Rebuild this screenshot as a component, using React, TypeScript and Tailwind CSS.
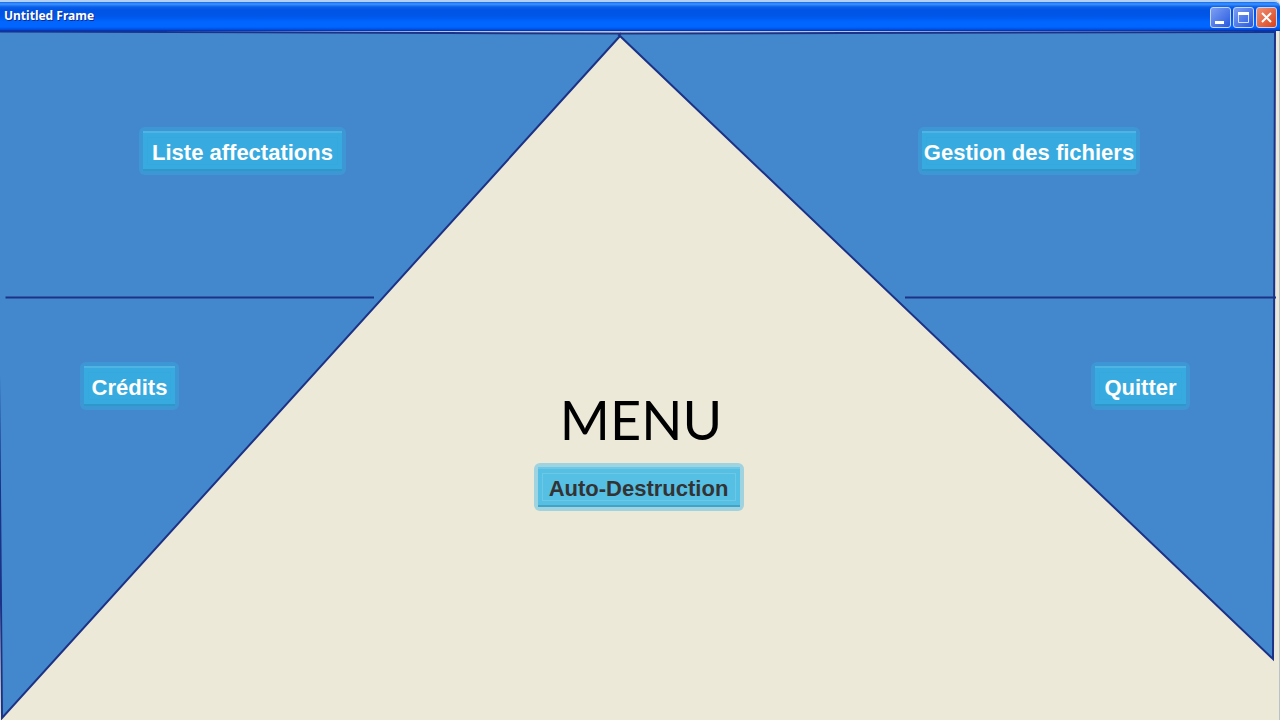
import type { ReactNode } from "react";

type MenuButtonProps = {
  children: ReactNode;
  width: string;
  tone?: "light" | "dark";
};

function MenuButton({ children, width, tone = "light" }: MenuButtonProps) {
  const frame = tone === "light" ? "bg-[#3d97d5]" : "bg-[#9fd3df]";
  const face =
    tone === "light"
      ? "border-t-[#4fb3e3] border-b-[#2f98ca] bg-[#37abe0] text-white"
      : "border-t-[#6cc8e6] border-b-[#43a3c4] bg-[#56bfe4] text-[#333333]";
  const inset = tone === "light" ? "border-[#35a8dd]" : "border-[#6cc8e4]";
  return (
    <button type="button" className={`h-12 rounded-md p-1 ${width} ${frame}`}>
      <span className={`block h-full border-t-2 border-b-2 px-1 py-1 ${face}`}>
        <span
          className={`flex h-full items-center justify-center border pt-[3px] text-[22px] leading-6 font-bold whitespace-nowrap ${inset}`}
        >
          {children}
        </span>
      </span>
    </button>
  );
}

function TitleBar() {
  const control =
    "flex size-[21px] items-center justify-center rounded-[3px] border border-[#c5d5f8]";
  return (
    <header className="flex h-[31px] items-center justify-between rounded-tr-md border-t-2 border-b border-t-[#b5d0f5] border-b-[#0037c0] bg-[linear-gradient(#1468ea_0px,#3c94ff_2px,#0a5ee8_5px,#0054e3_8px,#0056e8_14px,#0066ff_20px,#0066ff_25px,#0047d8_28px)] pr-[3px] pl-1">
      <h1 className="font-['Noto_Sans',sans-serif] text-[12px] leading-4 font-bold text-white [text-shadow:1px_1px_0_#0f2a8f]">
        Untitled Frame
      </h1>
      <div className="flex gap-0.5 pt-0.5">
        <button
          type="button"
          aria-label="Minimize"
          className={`${control} bg-linear-to-br from-[#7d9ff2] to-[#2858e0]`}
        >
          <svg viewBox="0 0 19 19" className="size-[19px]">
            <path d="M4 13h9v3H4z" fill="#fff" />
          </svg>
        </button>
        <button
          type="button"
          aria-label="Maximize"
          className={`${control} bg-linear-to-br from-[#7d9ff2] to-[#2858e0]`}
        >
          <svg viewBox="0 0 19 19" className="size-[19px]">
            <path d="M4.500 5v9.500h10V5" fill="none" stroke="#d4e0fb" />
            <path d="M4 4h11v3H4z" fill="#fff" />
          </svg>
        </button>
        <button
          type="button"
          aria-label="Close"
          className={`${control} bg-linear-to-br from-[#ee8f71] to-[#d83f13]`}
        >
          <svg viewBox="0 0 19 19" className="size-[19px]">
            <path d="M5 5l9 9M14 5l-9 9" stroke="#fff" strokeWidth="2" />
          </svg>
        </button>
      </div>
    </header>
  );
}

function Backdrop() {
  return (
    <svg
      viewBox="0 0 1280 689"
      preserveAspectRatio="none"
      aria-hidden="true"
      className="absolute inset-0 size-full"
    >
      <path d="M200 0.500H1100" stroke="#b9c5e0" />
      <g stroke="#1c3287" strokeWidth="2">
        <path d="M-4 0.500L620 2.500V5L2 687Z" fill="#4388cd" />
        <path d="M619 4L621 2.500L1275 1L1273 628Z" fill="#4388cd" />
        <path d="M5.500 266.500H374M905 266.500H1276" />
      </g>
      <path d="M1279.500 0V689" stroke="#b8c4c4" />
    </svg>
  );
}

export default function App() {
  return (
    <div className="flex min-h-screen flex-col bg-[#ece9d8] font-['Liberation_Sans',Arial,sans-serif]">
      <TitleBar />
      <main className="relative flex flex-1 flex-col">
        <Backdrop />
        <div className="relative flex flex-1 justify-between pt-24 pr-[90px] pl-20">
          <nav className="flex flex-col items-start gap-[187px]">
            <div className="pl-[59px]">
              <MenuButton width="w-[207px]">Liste affectations</MenuButton>
            </div>
            <MenuButton width="w-[99px]">Crédits</MenuButton>
          </nav>
          <section className="flex flex-col items-center pt-[255px] pl-[13px]">
            <h2 className="pb-[5px] pl-[5px] font-['Lato',sans-serif] text-[54px] leading-[76px] text-black">
              MENU
            </h2>
            <MenuButton width="w-[210px]" tone="dark">
              Auto-Destruction
            </MenuButton>
          </section>
          <nav className="flex flex-col items-end gap-[187px]">
            <div className="pr-[50px]">
              <MenuButton width="w-[222px]">Gestion des fichiers</MenuButton>
            </div>
            <MenuButton width="w-[99px]">Quitter</MenuButton>
          </nav>
        </div>
      </main>
    </div>
  );
}
